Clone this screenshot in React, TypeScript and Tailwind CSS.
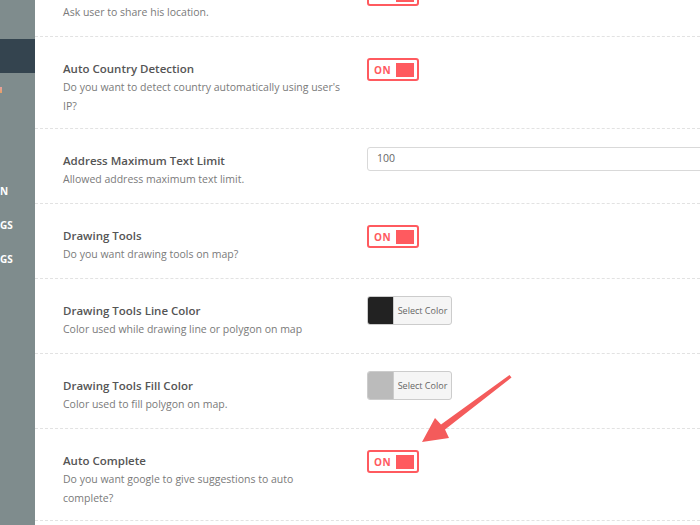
import React from "react";

type Row = {
  title: string;
  desc: string[];
  kind: "toggle" | "input" | "color";
  value?: string;
  swatch?: string;
  clipped?: boolean;
};

const rows: Row[] = [
  { title: "", desc: ["Ask user to share his location."], kind: "toggle", clipped: true },
  {
    title: "Auto Country Detection",
    desc: ["Do you want to detect country automatically using user's", "IP?"],
    kind: "toggle",
  },
  {
    title: "Address Maximum Text Limit",
    desc: ["Allowed address maximum text limit."],
    kind: "input",
    value: "100",
  },
  { title: "Drawing Tools", desc: ["Do you want drawing tools on map?"], kind: "toggle" },
  {
    title: "Drawing Tools Line Color",
    desc: ["Color used while drawing line or polygon on map"],
    kind: "color",
    swatch: "bg-[#222222]",
  },
  {
    title: "Drawing Tools Fill Color",
    desc: ["Color used to fill polygon on map."],
    kind: "color",
    swatch: "bg-[#bbbbbb]",
  },
  {
    title: "Auto Complete",
    desc: ["Do you want google to give suggestions to auto", "complete?"],
    kind: "toggle",
  },
];

const Toggle = ({ clipped }: { clipped?: boolean }) => (
  <div className="mt-[21px] flex h-[23px] w-[52px] items-center justify-between rounded-[3px] border-2 border-[#ff5a5f] pl-[5px] pr-[3px]">
    <span className="text-[10px] font-bold leading-none tracking-[0.5px] text-[#ff5a5f]">
      {clipped ? "" : "ON"}
    </span>
    <span className="h-[14px] w-[18px] bg-[#ff5a5f]" />
  </div>
);

const ColorPicker = ({ swatch }: { swatch: string }) => (
  <div className="mt-[17px] flex h-[29px] w-[85px] overflow-hidden rounded-[3px] border border-[#cccccc] bg-[#f5f5f5]">
    <span className={`w-[25px] ${swatch}`} />
    <span className="flex flex-1 items-center justify-center border-l border-[#cccccc] text-[9px] text-[#666]">
      Select Color
    </span>
  </div>
);

const SettingRow = ({ row }: { row: Row }) => (
  <div className="flex min-h-[75px] items-start border-b border-dashed border-[#e2e2e2] pl-[28px]">
    <div className="w-[304px] shrink-0 pb-[12px] pt-[23px]">
      <div className="h-[18px] whitespace-nowrap text-[11.5px] font-semibold leading-[18px] text-[#555]">
        {row.title}
      </div>
      {row.desc.map((d) => (
        <div key={d} className="whitespace-nowrap text-[10.5px] leading-[19px] text-[#7a7a7a]">
          {d}
        </div>
      ))}
    </div>
    <div className="flex-1">
      {row.kind === "toggle" && <Toggle clipped={row.clipped} />}
      {row.kind === "input" && (
        <div className="mt-[18px] flex h-[24px] w-[360px] items-center rounded-[3px] border border-[#d9d9d9] pl-[9px] text-[10.5px] text-[#666]">
          {row.value}
        </div>
      )}
      {row.kind === "color" && <ColorPicker swatch={row.swatch!} />}
    </div>
  </div>
);

const App = () => {
  return (
    <div className="flex h-[525px] w-[700px] overflow-hidden bg-white font-['Open_Sans',sans-serif]">
      <aside className="flex w-[35px] shrink-0 flex-col bg-[#7f8c8d] text-[10px] font-bold text-white">
        <div className="h-[39px] shrink-0" />
        <div className="h-[34px] shrink-0 bg-[#34444f]" />
        <div className="mt-[14px] h-[6px] w-[2px] shrink-0 bg-gradient-to-b from-[#e7a0a0] to-[#e8a060]" />
        <div className="mt-[92px] leading-[12px]">N</div>
        <div className="mt-[22px] leading-[12px]">GS</div>
        <div className="mt-[22px] leading-[12px]">GS</div>
      </aside>
      <main className="relative flex-1 overflow-hidden">
        <div className="mt-[-38px]">
          {rows.map((r, i) => (
            <SettingRow key={i} row={r} />
          ))}
        </div>
        <svg className="pointer-events-none absolute left-[-35px] top-0" width="700" height="525">
          <polygon
            points="509.5,375 511.5,377.5 445,429.5 449,438 422,442 435,418 441,424.5"
            fill="#f45b5b"
          />
        </svg>
      </main>
    </div>
  );
};

export default App;
